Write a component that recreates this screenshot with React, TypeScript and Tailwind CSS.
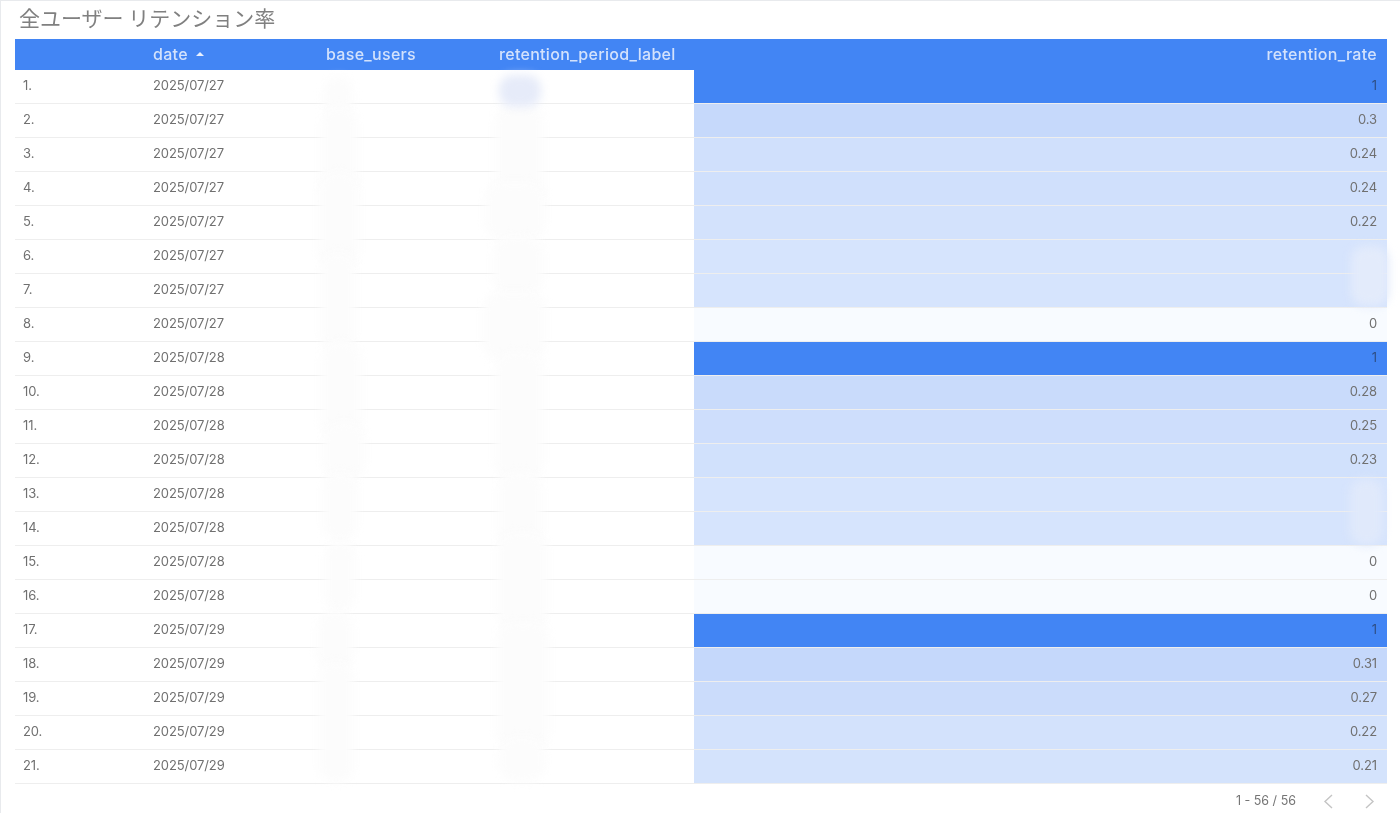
const rows = [
  { date: '2025/07/27', rate: '1', bg: 'bg-[#4285f4] text-[#2f4f86]' },
  { date: '2025/07/27', rate: '0.3', bg: 'bg-[#c6d9fb]' },
  { date: '2025/07/27', rate: '0.24', bg: 'bg-[#d0e0fc]' },
  { date: '2025/07/27', rate: '0.24', bg: 'bg-[#d0e0fc]' },
  { date: '2025/07/27', rate: '0.22', bg: 'bg-[#d3e2fc]' },
  { date: '2025/07/27', rate: '', bg: 'bg-[#d6e4fd]' },
  { date: '2025/07/27', rate: '', bg: 'bg-[#d6e4fd]' },
  { date: '2025/07/27', rate: '0', bg: 'bg-[#f8fbff]' },
  { date: '2025/07/28', rate: '1', bg: 'bg-[#4285f4] text-[#2f4f86]' },
  { date: '2025/07/28', rate: '0.28', bg: 'bg-[#c9dbfb]' },
  { date: '2025/07/28', rate: '0.25', bg: 'bg-[#cedefc]' },
  { date: '2025/07/28', rate: '0.23', bg: 'bg-[#d1e1fc]' },
  { date: '2025/07/28', rate: '', bg: 'bg-[#d6e4fd]' },
  { date: '2025/07/28', rate: '', bg: 'bg-[#d6e4fd]' },
  { date: '2025/07/28', rate: '0', bg: 'bg-[#f8fbff]' },
  { date: '2025/07/28', rate: '0', bg: 'bg-[#f8fbff]' },
  { date: '2025/07/29', rate: '1', bg: 'bg-[#4285f4] text-[#2f4f86]' },
  { date: '2025/07/29', rate: '0.31', bg: 'bg-[#c5d8fb]' },
  { date: '2025/07/29', rate: '0.27', bg: 'bg-[#cbdcfb]' },
  { date: '2025/07/29', rate: '0.22', bg: 'bg-[#d3e2fc]' },
  { date: '2025/07/29', rate: '0.21', bg: 'bg-[#d4e3fc]' },
];

// blurred smudges that hide the values in the reference
const smudges = [
  // base_users column
  'left-[322px] top-[76px] w-[30px] h-[40px]',
  'left-[320px] top-[105px] w-[36px] h-[100px]',
  'left-[318px] top-[170px] w-[40px] h-[100px]',
  'left-[320px] top-[250px] w-[34px] h-[100px]',
  'left-[320px] top-[340px] w-[40px] h-[100px]',
  'left-[322px] top-[420px] w-[42px] h-[60px]',
  'left-[322px] top-[470px] w-[34px] h-[70px]',
  'left-[324px] top-[540px] w-[30px] h-[70px]',
  'left-[316px] top-[610px] w-[36px] h-[60px]',
  'left-[318px] top-[660px] w-[34px] h-[122px]',
  // retention_period_label column
  'left-[494px] top-[103px] w-[48px] h-[110px]',
  'left-[484px] top-[180px] w-[60px] h-[60px]',
  'left-[492px] top-[235px] w-[50px] h-[60px]',
  'left-[482px] top-[290px] w-[62px] h-[70px]',
  'left-[494px] top-[350px] w-[48px] h-[130px]',
  'left-[497px] top-[470px] w-[44px] h-[80px]',
  'left-[496px] top-[530px] w-[50px] h-[100px]',
  'left-[496px] top-[620px] w-[52px] h-[130px]',
  'left-[498px] top-[735px] w-[46px] h-[46px]',
];

const tintedSmudges = [
  'left-[498px] top-[74px] w-[42px] h-[32px] bg-[#e6ebf9]',
  'left-[1350px] top-[245px] w-[38px] h-[60px] bg-[#e3ebfb]',
  'left-[1349px] top-[478px] w-[33px] h-[66px] bg-[#e0e9fb]',
];

export default function App() {
  return (
    <div className="relative h-[813px] w-[1400px] overflow-hidden border-t border-l border-[#e8eaed] bg-white font-['Inter','Noto_Sans_CJK_JP',sans-serif] text-[#707070]">
      <div className="blur-[0.5px]">
        <h1 className="flex h-[38px] items-center pb-[5px] pl-[18px] font-['Noto_Sans_CJK_JP',sans-serif] text-[21px] font-normal text-[#808080]">
          全ユーザー リテンション率
        </h1>

        <div className="ml-[14px] w-[1372px]">
          <div className="grid h-[31px] grid-cols-[130px_173px_173px_203px_693px] items-center bg-[#4285f4] pb-[1px] text-[16px] font-medium tracking-[0.3px] text-[#d3e2fc]">
            <div />
            <div className="flex items-center gap-2 pl-2">
              date
              <svg width="8" height="4" viewBox="0 0 8 4" className="mb-[1px]">
                <path d="M0 4 L4 0 L8 4 Z" fill="#e8f0fe" />
              </svg>
            </div>
            <div className="pl-2">base_users</div>
            <div className="pl-2">retention_period_label</div>
            <div className="pr-[10px] text-right">retention_rate</div>
          </div>

          {rows.map((row, i) => (
            <div
              key={i}
              className="grid h-[34px] grid-cols-[130px_173px_173px_203px_693px] items-center text-[13px] tracking-[-0.1px]"
            >
              <div className="flex h-full items-center border-b border-[#eeeeee] pb-[2px] pl-2">{i + 1}.</div>
              <div className="flex h-full items-center border-b border-[#eeeeee] pb-[2px] pl-2">{row.date}</div>
              <div className="h-full border-b border-[#eeeeee]" />
              <div className="h-full border-b border-[#eeeeee]" />
              <div className={`flex h-full items-center justify-end border-b border-[#eeeeee] pr-[10px] pb-[2px] ${row.bg}`}>
                {row.rate}
              </div>
            </div>
          ))}

          <div className="mt-[8px] flex items-center justify-end text-[12.5px] text-[#757575]">
            <span className="mr-[26px]">1 - 56 / 56</span>
            <svg width="12" height="16" viewBox="0 0 12 16" fill="none" stroke="#c4c4c4" strokeWidth="1.4" className="mr-[30px]">
              <path d="M10 2 L3 8.5 L10 15" />
            </svg>
            <svg width="12" height="16" viewBox="0 0 12 16" fill="none" stroke="#c4c4c4" strokeWidth="1.4" className="mr-[11px]">
              <path d="M2 2 L9 8.5 L2 15" />
            </svg>
          </div>
        </div>
      </div>

      {smudges.map((s, i) => (
        <div key={i} className={`absolute rounded-[18px] bg-[#fcfcfc] blur-[5px] ${s}`} />
      ))}
      {tintedSmudges.map((s, i) => (
        <div key={i} className={`absolute rounded-[14px] blur-[5px] ${s}`} />
      ))}
    </div>
  );
}
